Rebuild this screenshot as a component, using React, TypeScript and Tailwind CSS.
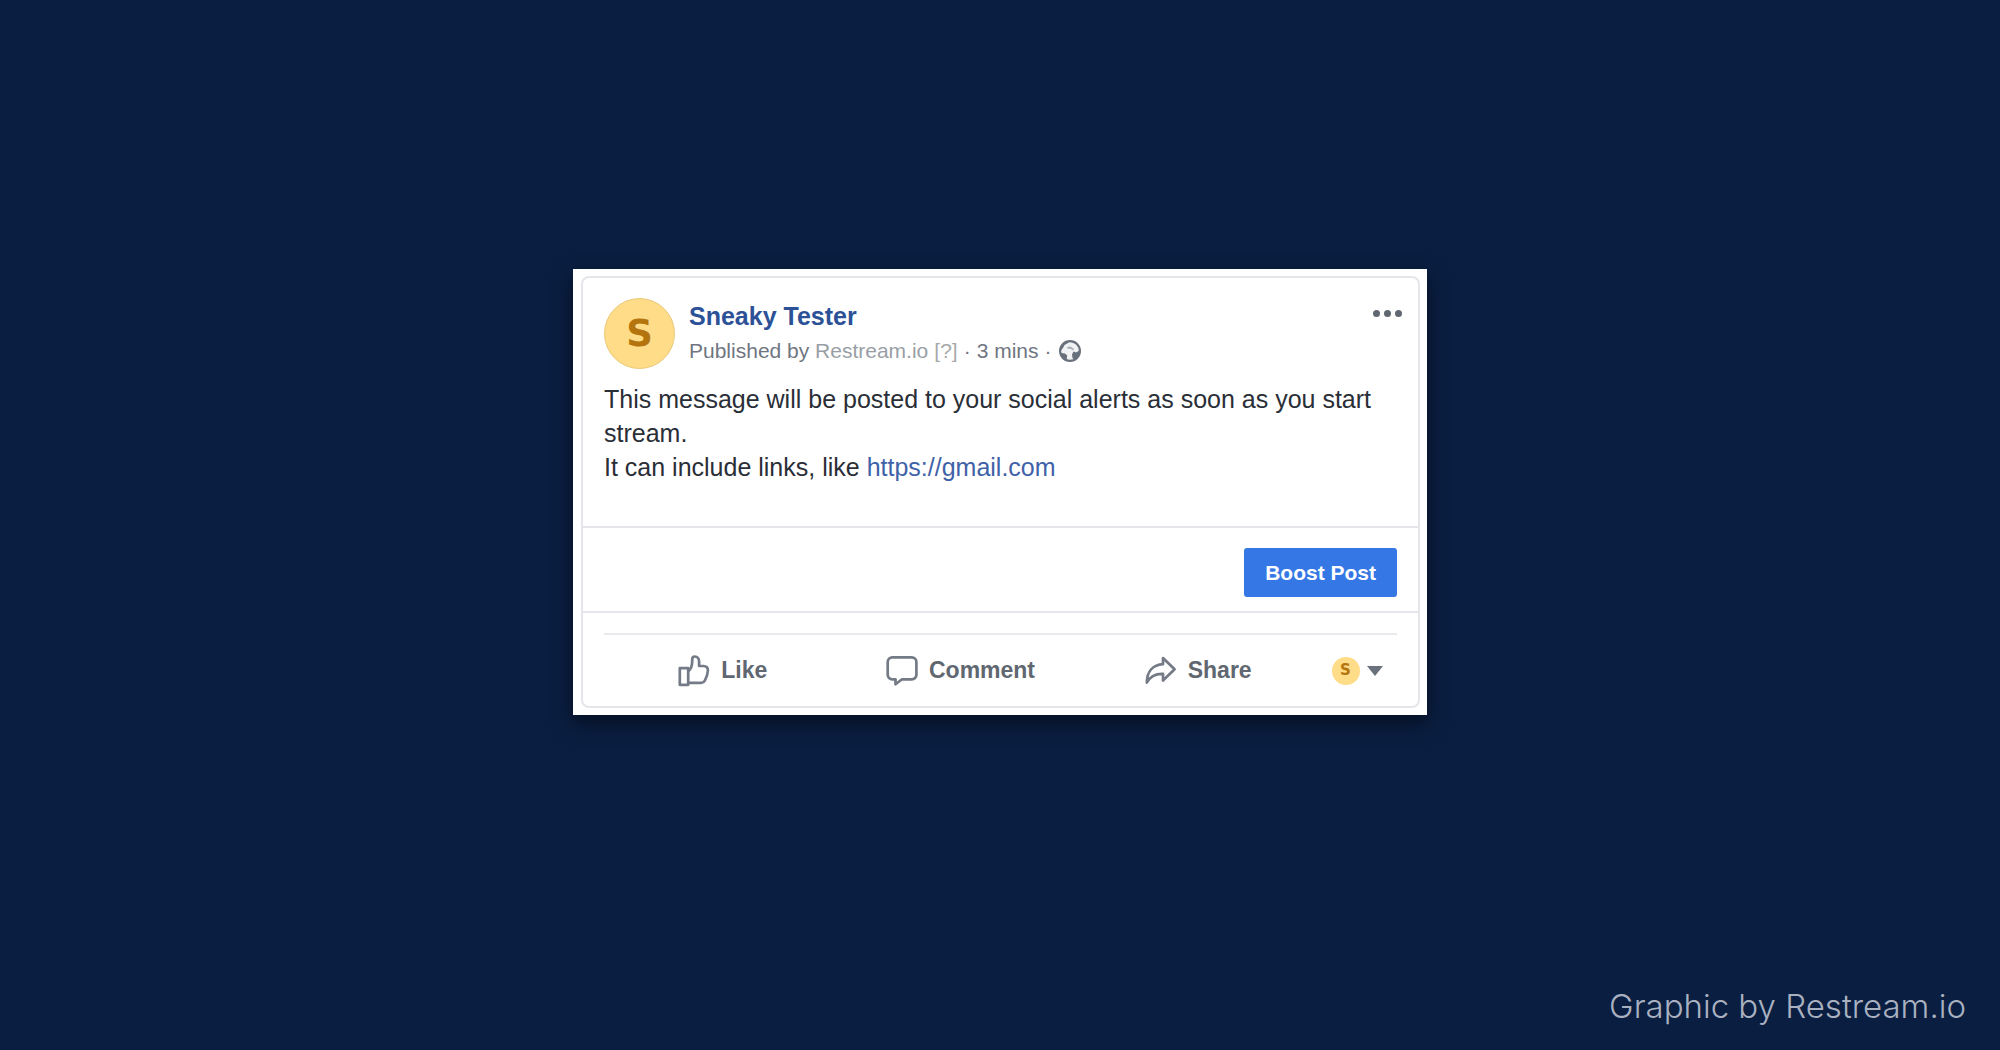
import React from 'react';

const actions = [
  { name: 'Like', icon: LikeIcon },
  { name: 'Comment', icon: CommentIcon },
  { name: 'Share', icon: ShareIcon },
];

function LikeIcon() {
  return (
    <svg viewBox="0 0 32 32" className="w-8 h-8" fill="none" stroke="#747b86" strokeWidth="2.7" strokeLinejoin="round" aria-hidden="true">
      <path d="M1.8 13.2h8.4v16.6H1.8z" />
      <path d="M10.2 16.5C13 14 14.2 10.5 14.2 6.5V4.5c0-2 1-3 2.6-3 2.4 0 4.3 2.1 4.3 5.1V11h4.4c3 0 4.6 1.7 4.4 4.5-.2 3.5-1.6 7.5-3.1 10.1-.8 1.4-1.8 2.2-3.5 2.2H10.2" />
    </svg>
  );
}

function CommentIcon() {
  return (
    <svg viewBox="0 0 32 32" className="w-8 h-8" fill="none" stroke="#747b86" strokeWidth="2.7" strokeLinejoin="round" aria-hidden="true">
      <path d="M6.3 2.3h19.5a4.6 4.6 0 0 1 4.6 4.6v12.8a4.6 4.6 0 0 1-4.6 4.6H16l-6.5 5v-5H6.3a4.6 4.6 0 0 1-4.6-4.6V6.9a4.6 4.6 0 0 1 4.6-4.6z" />
    </svg>
  );
}

function ShareIcon() {
  return (
    <svg viewBox="0 0 32 32" className="w-8 h-8" fill="none" stroke="#747b86" strokeWidth="2.7" strokeLinejoin="round" aria-hidden="true">
      <path d="M18 3l11.6 11.2L18 25.5v-6.7C10.5 18.5 5 21.5 1.8 27.6 2 16.5 8 9.8 18 9.2z" />
    </svg>
  );
}

function GlobeIcon() {
  return (
    <svg viewBox="0 0 24 24" className="w-6 h-6" aria-label="Public" role="img">
      <circle cx="12" cy="12" r="9.9" fill="#f1f2f4" stroke="#68707b" strokeWidth="2.2" />
      <path d="M2.5 8L6 4.5 11 2l-1 2-3.500 2L5 9l-2.500 3z" fill="#68707b" />
      <path d="M9 8l3.500-.5 3.500 2.500-.5 1.500-2.500-1.500-3.500-.5z" fill="#a9aeb5" />
      <path d="M3 14l4 .5 2.200 2-.4 2.500.7 3-4-1.500z" fill="#68707b" />
      <path d="M14 15.500l1.500-3 2.500 1 3.500-2-1 5.500-4.500 4-1.500-2z" fill="#68707b" />
    </svg>
  );
}

export default function App() {
  return (
    <div className="min-h-screen flex flex-col bg-[#0a1e41] font-['Liberation_Sans',Arial,sans-serif]">
      <main className="flex-1 flex items-center justify-center">
        <div className="w-full max-w-[854px] bg-white pl-2 pr-[7px] py-[7px] shadow-[0_8px_18px_rgba(0,0,0,0.5)]">
          <article className="border-2 border-[#e5e6ea] rounded-lg">
            {/* Post header */}
            <header className="flex items-start pl-[21px] pr-3 pt-5">
              <div className="w-[71px] h-[71px] shrink-0 rounded-full bg-[#ffdc87] border border-[#e9c878] flex items-center justify-center text-[#b4750f] text-[37px] font-bold font-['DejaVu_Sans',sans-serif]">
                S
              </div>
              <div className="ml-3.5 flex-1">
                <h1 className="text-[25px] leading-9 font-bold text-[#2c5197]">Sneaky Tester</h1>
                <div className="flex items-center gap-1.5 text-[21px] leading-[34px] text-[#6f7681]">
                  <span>
                    Published by <a href="#restream" className="text-[#999ea6]">Restream.io</a>
                  </span>
                  <a href="#help" className="text-[#a9a9a9]">[?]</a>
                  <span>·</span>
                  <span>3 mins</span>
                  <span>·</span>
                  <GlobeIcon />
                </div>
              </div>
              <button type="button" aria-label="Post options" className="flex gap-1 px-1 py-3 text-[#606770]">
                <span className="w-[7px] h-[7px] rounded-full bg-current" />
                <span className="w-[7px] h-[7px] rounded-full bg-current" />
                <span className="w-[7px] h-[7px] rounded-full bg-current" />
              </button>
            </header>

            {/* Message */}
            <div className="px-[21px] pt-[13px] pb-[42px] text-[25px] leading-[34px] text-[#2a2e37]">
              <p>This message will be posted to your social alerts as soon as you start stream.</p>
              <p>
                It can include links, like <a href="https://gmail.com" className="text-[#3f62a8]">https://gmail.com</a>
              </p>
            </div>

            <div className="flex justify-end border-y-2 border-[#e5e6ea] px-[21px] pt-5 pb-3.5">
              <button type="button" className="h-[49px] px-[21px] rounded-[3px] bg-[#3578e5] text-white text-[21px] font-bold">
                Boost Post
              </button>
            </div>

            {/* Actions */}
            <div className="px-[21px] pt-5">
              <div className="flex items-center border-t-2 border-[#e9eaed] h-[73px]">
                {actions.map((action) => (
                  <button type="button" key={action.name} className="flex-1 flex items-center justify-center gap-[11px] text-[23px] font-bold text-[#606770]">
                    <action.icon />
                    {action.name}
                  </button>
                ))}
                <button type="button" aria-label="Post as Sneaky Tester" className="w-20 flex items-center justify-center gap-[7px]">
                  <span className="w-7 h-7 rounded-full bg-[#ffdc87] flex items-center justify-center text-[#b4750f] text-[15px] font-bold font-['DejaVu_Sans',sans-serif]">
                    S
                  </span>
                  <svg viewBox="0 0 16 10" className="w-4 h-2.5" fill="#6b727d" aria-hidden="true">
                    <path d="M0 0h16L8 10z" />
                  </svg>
                </button>
              </div>
            </div>
          </article>
        </div>
      </main>

      <footer className="h-[66px] px-[34px] text-right text-[33px] leading-[44px] font-light text-[#a9b1c0] font-['Inter',sans-serif]">
        Graphic by Restream.io
      </footer>
    </div>
  );
}
